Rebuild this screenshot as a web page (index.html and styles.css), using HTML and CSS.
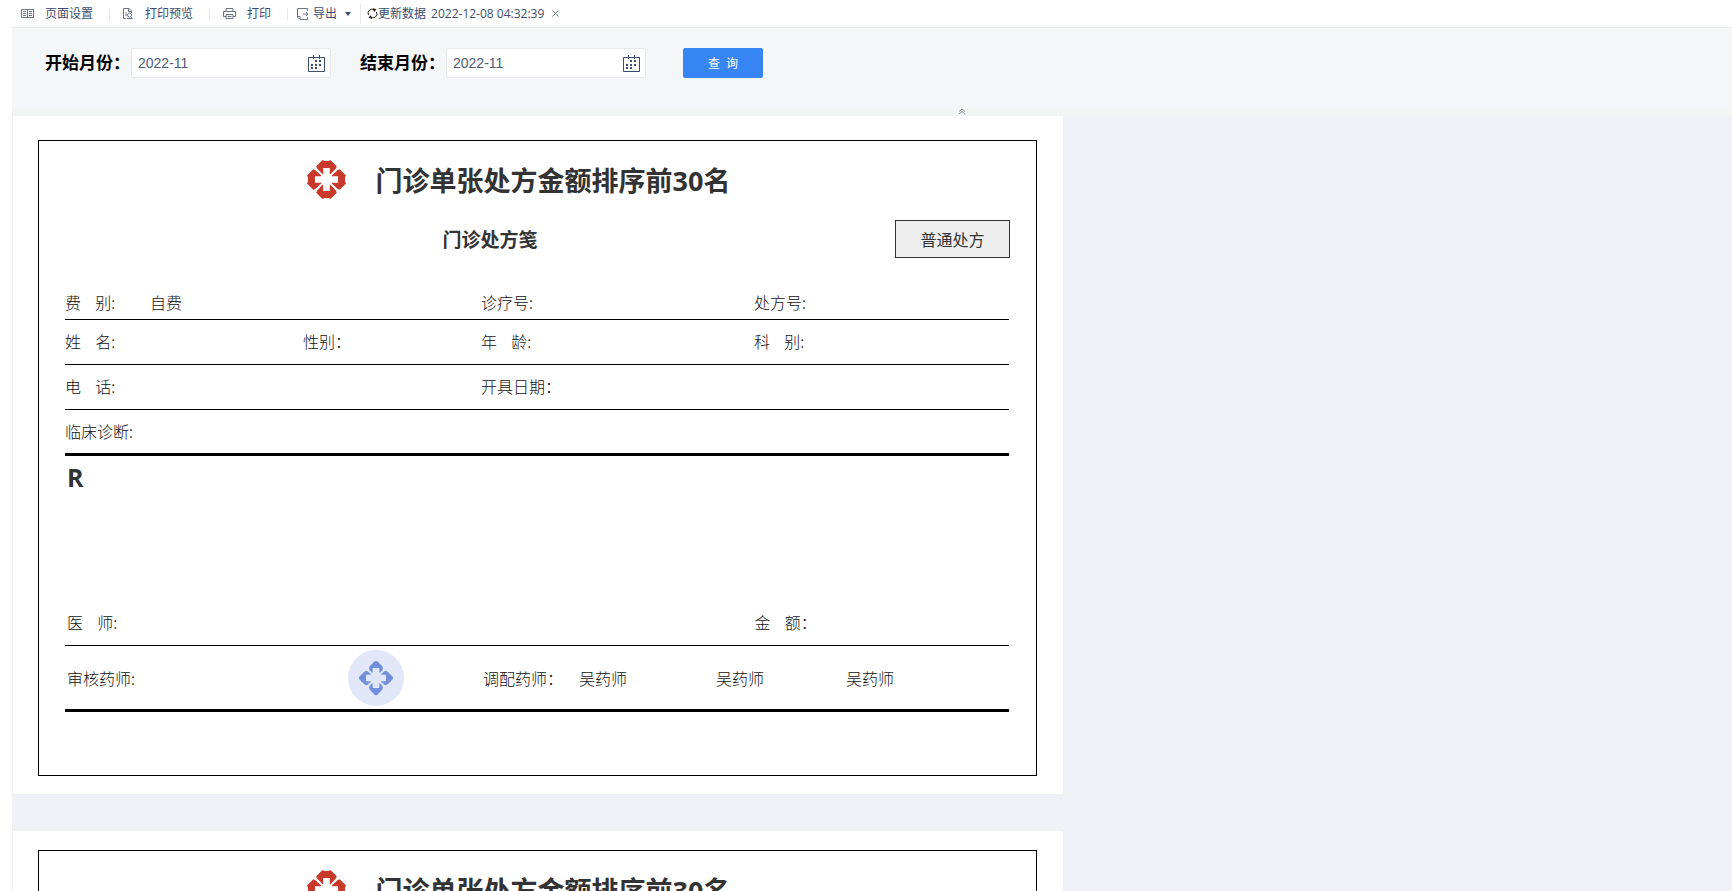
FILE: index.html
```
<!DOCTYPE html>
<html lang="zh-CN">

<head>
    <meta charset="UTF-8">
    <meta name="viewport" content="width=device-width, initial-scale=1.0">
    <title>门诊单张处方金额排序前30名</title>
    <link rel="stylesheet" href="styles.css">
</head>

<body>
    <!-- shared shapes -->
    <svg class="defs" width="0" height="0" aria-hidden="true">
        <symbol id="logo" viewBox="-59 -59 118 118">
            <path id="petal" d="M-12-59L-6-56H6L12-59L31-40L29-34L12-16H10V-35H-10V-16H-12L-29-34L-31-40Z" />
            <use href="#petal" transform="rotate(90)" />
            <use href="#petal" transform="rotate(180)" />
            <use href="#petal" transform="rotate(270)" />
        </symbol>
        <symbol id="stamp" viewBox="-84 -84 168 168">
            <circle r="84" fill="#e1e7f8" />
            <g fill="#7090dc">
                <path id="arrow" d="M-4-50Q0-53 4-50L18-36Q22-32 20-25L12-16H10V-30H-10V-16H-12L-20-25Q-22-32-18-36Z" />
                <use href="#arrow" transform="rotate(90)" />
                <use href="#arrow" transform="rotate(180)" />
                <use href="#arrow" transform="rotate(270)" />
            </g>
        </symbol>
        <symbol id="calendar" viewBox="0 0 17 17">
            <path d="M.5 2.5H16.5V16.5H.5Z M5.5 0V4 M11.5 0V4" fill="none" stroke="#3d4d6e" />
            <path d="M7 5h2v2h-2z M11 5h2v2h-2z M3 9h2v2h-2z M7 9h2v2h-2z M11 9h2v2h-2z M3 12h2v2h-2z M7 12h2v2h-2z" fill="#3d4d6e" />
        </symbol>
    </svg>

    <div class="app">
        <div class="toolbar">
            <button class="tool">
                <svg width="13" height="10" viewBox="0 0 13 10"><path d="M.5.5h12v8h-12z M6.500 0v9 M2 2.500h3 M2 4.500h3 M2 6.500h3 M8 2.500h3 M8 4.500h3 M8 6.500h3" /></svg>
                <span>页面设置</span>
            </button>
            <button class="tool">
                <svg width="11" height="12" viewBox="0 0 11 12"><path d="M3 10.500H.5V.5H6L8.500 3V5 M5.500 .5V3.500H8.500 M3 4.500V8 M8 9L9.500 10.500H4" /><circle cx="6.500" cy="7" r="2" /></svg>
                <span>打印预览</span>
            </button>
            <button class="tool">
                <svg width="13" height="12" viewBox="0 0 13 12"><path d="M3 3V.5H10V3 M3 8.500H.5V3.500H12.500V8.500H10 M3 6.500H10V10.500H3Z M4.500 8.500H8.500" /></svg>
                <span>打印</span>
            </button>
            <button class="tool export">
                <svg width="12" height="12" viewBox="0 0 12 12"><path d="M10.500 3V.5H.5V9L3 11.500H10.500V9 M.5 8.500H3V11 M6 6H11 M9 4L11 6L9 8" /></svg>
                <span>导出</span>
                <i class="caret"></i>
            </button>
            <div class="refresh">
                <svg width="11" height="11" viewBox="0 0 11 11"><path d="M1.500 7A4 4 0 0 1 7.500 2 M9.500 4A4 4 0 0 1 3.500 9" /><path class="solid" d="M6 0L9.500 1.500L7 4Z M5 11L1.500 9.500L4 7Z" /></svg>
                <span>更新数据</span>
                <time>2022-12-08 04:32:39</time>
                <button class="close" aria-label="关闭">
                    <svg width="7" height="7" viewBox="0 0 7 7"><path d="M.5.5L6.500 6.500M6.500.5L.5 6.500" /></svg>
                </button>
            </div>
        </div>

        <form class="query">
            <label for="start">开始月份：</label>
            <div class="field">
                <input type="text" id="start" value="2022-11">
                <button type="button" aria-label="选择月份"><svg width="17" height="17"><use href="#calendar" /></svg></button>
            </div>
            <label for="end">结束月份：</label>
            <div class="field">
                <input type="text" id="end" value="2022-11">
                <button type="button" aria-label="选择月份"><svg width="17" height="17"><use href="#calendar" /></svg></button>
            </div>
            <button type="submit" class="search">查  询</button>
        </form>

        <div class="fold">
            <button aria-label="收起"><svg width="8" height="7" viewBox="0 0 8 7"><path d="M1 3.500L4 1L7 3.500M1 6L4 3.500L7 6" /></svg></button>
        </div>

        <main class="report">
            <section class="sheet">
                <div class="frame">
                    <header class="title">
                        <svg width="39" height="39"><use href="#logo" /></svg>
                        <h1>门诊单张处方金额排序前30名</h1>
                    </header>
                    <div class="subtitle">
                        <h2>门诊处方笺</h2>
                        <span class="badge">普通处方</span>
                    </div>
                    <div class="row first"><span>费    别:</span><span>自费</span><span class="c3">诊疗号:</span><span class="c4">处方号:</span></div>
                    <div class="row"><span>姓    名:</span><span class="c2">性别：</span><span class="c3">年    龄:</span><span class="c4">科    别:</span></div>
                    <div class="row"><span>电    话:</span><span class="c3">开具日期：</span></div>
                    <div class="row thick"><span>临床诊断:</span></div>
                    <div class="rx">R</div>
                    <div class="row doctor"><span>医    师:</span><span class="c4">金    额：</span></div>
                    <div class="row thick check">
                        <span>审核药师:</span>
                        <svg width="56" height="56"><use href="#stamp" /></svg>
                        <span>调配药师：</span><span>吴药师</span><span>吴药师</span><span>吴药师</span>
                    </div>
                </div>
            </section>

            <section class="sheet">
                <div class="frame">
                    <header class="title">
                        <svg width="39" height="39"><use href="#logo" /></svg>
                        <h1>门诊单张处方金额排序前30名</h1>
                    </header>
                </div>
            </section>
        </main>
    </div>
</body>

</html>
```
FILE: styles.css
```
* {
    box-sizing: border-box;
    margin: 0;
    padding: 0;
}

body {
    font-family: "Open Sans", "Noto Sans CJK SC", sans-serif;
    font-size: 12px;
    color: #333;
    background: #fff;
}

button {
    border: none;
    background: none;
    font: inherit;
    color: inherit;
    cursor: pointer;
}

svg {
    display: block;
    flex: none;
}

.defs {
    position: absolute;
}

.app {
    display: flex;
    flex-direction: column;
    height: 100vh;
    padding-left: 12px;
    overflow: hidden;
}

/* toolbar */
.toolbar {
    display: flex;
    align-items: center;
    flex: none;
    height: 28px;
    border-bottom: 1px solid #e6e8ec;
    color: #3d4d6e;
    line-height: 16px;
    white-space: nowrap;
}

.toolbar svg {
    fill: none;
    stroke: #6b7588;
}

.tool {
    display: flex;
    align-items: center;
    gap: 11px;
    padding: 0 16px 0 13px;
    border-right: 1px solid #e6e8ec;
    height: 12px;
}

.tool:first-child {
    padding-left: 9px;
}

.export {
    gap: 4px;
    height: 20px;
    padding: 0 9px;
}

.caret {
    margin-left: 4px;
    border: 3px solid transparent;
    border-top: 4px solid #3d4d6e;
    border-bottom: 0;
}

.refresh {
    display: flex;
    align-items: center;
    padding-left: 6px;
}

.refresh > svg {
    stroke: #222;
}

.refresh .solid {
    fill: #222;
    stroke: none;
}

.refresh time {
    margin: 0 8px 0 5px;
}

/* query panel */
.query {
    display: flex;
    align-items: flex-start;
    flex: none;
    height: 80px;
    padding: 20px 0 0 33px;
    background: #f5f6f8;
}

.query label {
    width: 86px;
    font-size: 17px;
    font-weight: bold;
    line-height: 30px;
    color: #000;
    white-space: nowrap;
}

.field {
    display: flex;
    align-items: center;
    width: 200px;
    height: 30px;
    margin-right: 29px;
    padding: 0 5px 0 6px;
    border: 1px solid #e6e8ec;
    border-radius: 2px;
    background: #fff;
}

.field input {
    flex: 1;
    min-width: 0;
    border: none;
    outline: none;
    font: 14px "Liberation Sans", Arial, sans-serif;
    color: #4d5a75;
}

.search {
    width: 80px;
    height: 30px;
    margin-left: 8px;
    border-radius: 2px;
    background: #3685f2;
    color: #fff;
    white-space: pre;
}

.fold {
    display: flex;
    justify-content: center;
    align-items: flex-start;
    flex: none;
    height: 8px;
    padding-left: 180px;
    background: #f3f5f4;
}

.fold svg {
    fill: none;
    stroke: #8a94a8;
}

/* report */
.report {
    flex: 1;
    min-height: 0;
    overflow: hidden;
    border-left: 1px solid #f0f0f0;
    background: #f0f1f6;
}

.sheet {
    max-width: 1050px;
    margin-bottom: 37px;
    padding: 19px 26px 18px 25px;
    background: #fff;
    font-size: 16px;
    font-family: "Noto Sans CJK SC", sans-serif;
}

.sheet:first-child {
    padding-top: 24px;
}

.frame {
    min-height: 636px;
    padding: 19px 26px 63px;
    border: 1px solid #000;
}

.title {
    display: flex;
    justify-content: center;
    gap: 30px;
    height: 39px;
    padding-right: 38px;
    fill: #c8382b;
}

.title h1 {
    font: bold 27px/42px "Open Sans", "Noto Sans CJK SC", sans-serif;
}

.subtitle {
    display: flex;
    align-items: center;
    margin: 21px 0 29px;
}

.subtitle h2 {
    flex: 1;
    padding-left: 20px;
    font-size: 19px;
    line-height: 28px;
    text-align: center;
}

.badge {
    width: 115px;
    border: 1px solid #333;
    background: #eee;
    line-height: 36px;
    text-align: center;
}

.row {
    display: grid;
    grid-template-columns: 85fr 153fr 178fr 273fr 255fr;
    align-items: center;
    height: 45px;
    margin-right: 1px;
    padding-bottom: 2px;
    border-bottom: 1px solid #000;
    font-weight: 300;
    color: #111;
    line-height: 24px;
    white-space: pre;
}

.first {
    height: 33px;
}

.thick {
    height: 46px;
    border-bottom: 3px solid #000;
}

.c2 {
    grid-column: 3;
}

.c3 {
    grid-column: 4;
}

.c4 {
    grid-column: 5;
}

.rx {
    height: 145px;
    padding: 3px 2px;
    font: bold 25px/36px "Open Sans", sans-serif;
}

.doctor {
    padding-left: 2px;
}

.check {
    grid-template-columns: 281fr 135fr 96fr 137fr 130fr 163fr;
    height: 66px;
    padding: 0 0 0 2px;
}
```
